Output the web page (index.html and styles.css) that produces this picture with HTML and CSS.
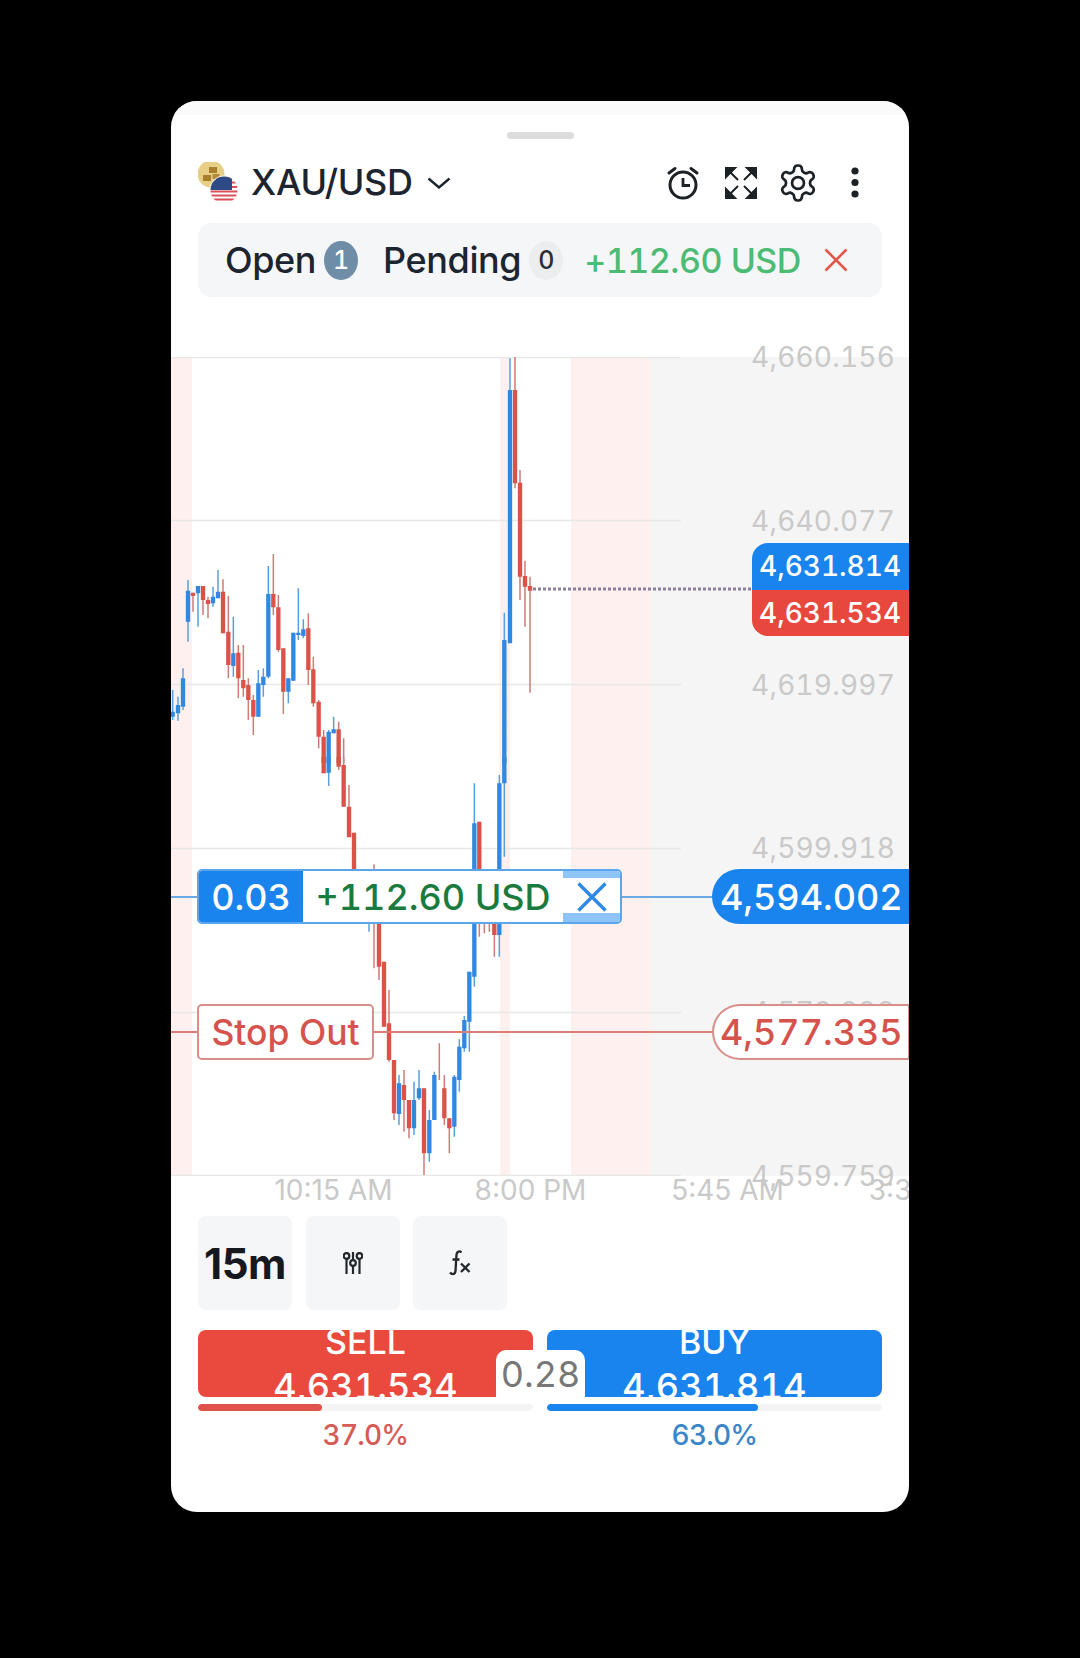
FILE: index.html
```html
<!DOCTYPE html>
<html lang="en">
<head>
<meta charset="utf-8">
<title>XAU/USD</title>
<link rel="stylesheet" href="styles.css">
</head>
<body>
<main class="sheet">
  <div class="sheet-strip"></div>
  <div class="handle"></div>

  <header class="header">
    <svg class="pair-icon" viewBox="0 0 40 41" width="40" height="41">
      <defs><clipPath id="flagClip"><circle cx="26" cy="28" r="13.5"/></clipPath></defs>
      <circle cx="13" cy="12" r="13.5" fill="#e8cf86"/>
      <rect x="11" y="5" width="8" height="6" fill="#a97f2c"/>
      <rect x="5" y="13" width="8" height="6" fill="#a97f2c"/>
      <rect x="14.5" y="12" width="7" height="5" fill="#b38a3a"/>
      <circle cx="26" cy="28" r="14.5" fill="#fbf6e8"/>
      <g clip-path="url(#flagClip)">
        <rect x="12" y="14" width="28" height="28" fill="#fff"/>
        <path d="M12 16h28M12 20.5h28M12 25h28M12 29.5h28M12 33.5h28M12 37.5h28" stroke="#d9505a" stroke-width="2"/>
        <rect x="12" y="14" width="22" height="14" fill="#2f4b86"/>
      </g>
    </svg>
    <h1 class="pair-name">XAU/USD</h1>
    <svg class="chevron" viewBox="0 0 24 12" width="24" height="12"><path d="M1.5 1.5 12 10.5 22.5 1.5" fill="none" stroke="#1c2430" stroke-width="2.4"/></svg>
    <div class="header-actions">
      <svg class="action" viewBox="0 0 34 34" width="34" height="34" fill="none" stroke="#1c2126" stroke-width="3">
        <circle cx="17" cy="19" r="13"/>
        <path d="M17 12V19.5H24" stroke-width="2.8"/>
        <path d="M3 7 9 2.5M31 7 25 2.5" stroke-linecap="round"/>
      </svg>
      <svg class="action" viewBox="0 0 34 34" width="34" height="34" fill="#1c2126" stroke="#1c2126" stroke-width="3">
        <path d="M2 2H11L2 11ZM5 5 14 14" stroke-width="2"/>
        <path d="M32 2H23L32 11ZM29 5 20 14" stroke-width="2"/>
        <path d="M2 32H11L2 23ZM5 29 14 20" stroke-width="2"/>
        <path d="M32 32H23L32 23ZM29 29 20 20" stroke-width="2"/>
      </svg>
      <svg class="action action-gear" viewBox="0 0 24 24" width="42" height="42" fill="none" stroke="#1c2126" stroke-width="1.55">
        <path d="M12.22 2h-.44a2 2 0 0 0-2 2v.18a2 2 0 0 1-1 1.73l-.43.25a2 2 0 0 1-2 0l-.15-.08a2 2 0 0 0-2.73.73l-.22.38a2 2 0 0 0 .73 2.73l.15.1a2 2 0 0 1 1 1.72v.51a2 2 0 0 1-1 1.74l-.15.09a2 2 0 0 0-.73 2.73l.22.38a2 2 0 0 0 2.73.73l.15-.08a2 2 0 0 1 2 0l.43.25a2 2 0 0 1 1 1.73V20a2 2 0 0 0 2 2h.44a2 2 0 0 0 2-2v-.18a2 2 0 0 1 1-1.73l.43-.25a2 2 0 0 1 2 0l.15.08a2 2 0 0 0 2.73-.73l.22-.39a2 2 0 0 0-.73-2.73l-.15-.08a2 2 0 0 1-1-1.74v-.5a2 2 0 0 1 1-1.74l.15-.09a2 2 0 0 0 .73-2.73l-.22-.38a2 2 0 0 0-2.73-.73l-.15.08a2 2 0 0 1-2 0l-.43-.25a2 2 0 0 1-1-1.73V4a2 2 0 0 0-2-2z"/>
        <circle cx="12" cy="12" r="3.4"/>
      </svg>
      <svg class="action" viewBox="0 0 34 34" width="34" height="34" fill="#1c2126">
        <circle cx="17" cy="5" r="3.6"/><circle cx="17" cy="16.5" r="3.6"/><circle cx="17" cy="28" r="3.6"/>
      </svg>
    </div>
  </header>

  <nav class="tabs">
    <span class="tab-label">Open</span>
    <span class="count count-active">1</span>
    <span class="tab-label tab-pending">Pending</span>
    <span class="count">0</span>
    <span class="tabs-pnl">+112.60 USD</span>
    <svg class="tabs-close" viewBox="0 0 24 24" width="24" height="24"><path d="M1.5 1.5 22.5 22.5M22.5 1.5 1.5 22.5" stroke="#e2584d" stroke-width="2.6"/></svg>
  </nav>

  <section class="chart">
    <svg class="plot" viewBox="0 0 738 819" width="738" height="819">
      <rect x="479" y="0" width="259" height="819" fill="#f5f5f5"/>
      <g fill="#fdf0ee">
        <rect x="0" y="0" width="21" height="819"/>
        <rect x="329" y="0" width="10" height="819"/>
        <rect x="400" y="0" width="79" height="819"/>
      </g>
      <path d="M0 .5H510M0 163.5H510M0 327.5H510M0 491.5H510M0 655.5H510M0 818.5H510" stroke="#e8e8e8" stroke-width="1.5" fill="none"/>
      <path d="M362 232H581" stroke="#8d7f9a" stroke-width="3" stroke-dasharray="3 2" fill="none"/>
      <g transform="translate(-1 -7) scale(.33333)" fill="none">
        <path stroke="#5a9fdc" stroke-width="4.5" d="M8 1020V1110M24 1040V1112M39 955V1080M54 690V875M84 708V830M129 710V770M144 660V745M190 800V980M265 960V1100M280 955V1040M295 648V985M355 985V1060M370 848V992M385 715V870M400 808V865M476 1140V1240M491 1100V1150M1003 788V1240M1020 25V880"/>
        <path stroke="#3288e0" stroke-width="13" d="M8 1085V1100M24 1065V1090M39 985V1070M54 722V815M84 708V730M129 740V760M144 725V745M190 910V948M265 1000V1100M280 980V1005M295 732V980M355 985V1025M370 848V992M385 848V855M400 838V858M476 1145V1240M491 1138V1150M1003 870V1240M1020 120V880"/>
        <path stroke="#cf7c76" stroke-width="4.5" d="M69 728V785M99 708V795M114 740V805M159 688V850M175 738V985M205 885V1045M220 885V1040M235 985V1110M250 1035V1155M310 612V795M325 735V905M340 895V1092M415 790V1005M430 920V1070M446 1050V1195M461 1140V1240M506 1115V1240M521 1165V1240M1035 20V415M1050 360V750M1065 632V830M1080 680V1028"/>
        <path stroke="#db5249" stroke-width="13" d="M69 728V738M99 708V750M114 750V762M159 725V850M175 845V945M205 908V985M220 990V1015M235 1005V1050M250 1050V1100M310 732V772M325 772V900M340 895V1025M415 835V960M430 958V1060M446 1055V1160M461 1160V1240M506 1138V1240M1035 120V400M1050 398V680M1065 678V710M1080 708V722"/>
      </g>
      <g transform="translate(-1 403) scale(.33333)" fill="none">
        <path stroke="#5a9fdc" stroke-width="4.5" d="M476 -10V78M913 70V680M988 45V590M1003 -10V290M597 480V515M687 945V1095M732 965V1125M747 930V1020M778 1050V1205M793 935V1080M853 945V1130M868 838V995M883 768V875M898 635V875"/>
        <path stroke="#3288e0" stroke-width="13" d="M476 -10V38M913 190V650M988 70V525M1003 -10V70M687 970V1062M732 1020V1105M747 985V1015M778 1080V1180M793 945V1080M853 950V1100M868 860V960M883 780V865M898 635V785"/>
        <path stroke="#cf7c76" stroke-width="4.5" d="M461 -10V40M506 -10V30M521 -10V140M537 75V195M552 218V330M612 313V625M627 480V660M642 605V800M657 690V905M672 900V1080M702 930V1115M717 1020V1135M762 985V1245M808 850V960M823 945V1095M838 1075V1180M928 185V530M943 480V520M958 480V515M973 480V590"/>
        <path stroke="#db5249" stroke-width="13" d="M461 -10V40M506 -10V20M521 15V140M537 140V232M552 218V330M627 480V620M642 605V800M657 790V900M672 900V1060M702 975V1020M717 1020V1105M762 985V1180M823 985V1075M838 1075V1105M928 185V340M973 480V525"/>
      </g>
    </svg>

    <div class="time-axis">
      <span class="tick">10:15 AM</span>
      <span class="tick">8:00 PM</span>
      <span class="tick">5:45 AM</span>
      <span class="tick">3:30 PM</span>
    </div>

    <div class="price-axis">
      <span>4,660.156</span>
      <span>4,640.077</span>
      <span>4,619.997</span>
      <span>4,599.918</span>
      <span>4,579.838</span>
      <span>4,559.759</span>
    </div>

    <div class="quote">
      <div class="quote-ask">4,631.814</div>
      <div class="quote-bid">4,631.534</div>
    </div>

    <div class="level level-position">
      <div class="position-label">
        <span class="position-qty">0.03</span>
        <span class="position-pnl">+112.60 USD</span>
        <span class="position-close">
          <svg viewBox="0 0 30 30" width="30" height="30"><path d="M1.5 1.5 28.5 28.5M28.5 1.5 1.5 28.5" stroke="#2e8ae6" stroke-width="3.4"/></svg>
        </span>
      </div>
      <span class="level-tag position-tag">4,594.002</span>
    </div>

    <div class="level level-stop">
      <span class="stop-label">Stop Out</span>
      <span class="level-tag stop-tag">4,577.335</span>
    </div>
  </section>

  <div class="toolbar">
    <button class="tool tool-interval">15m</button>
    <button class="tool">
      <svg viewBox="0 0 20 24" width="20" height="24" fill="none" stroke="#23282d" stroke-width="2.2">
        <path d="M3.5 8V23M10 1V9M10 15V23M16.5 8V23M3.5 1V2M16.5 1V2"/>
        <circle cx="3.5" cy="5" r="2.8"/><circle cx="10" cy="12" r="2.8"/><circle cx="16.5" cy="5" r="2.8"/>
      </svg>
    </button>
    <button class="tool">
      <svg viewBox="0 0 22 26" width="22" height="26" fill="none" stroke="#23282d" stroke-width="2.3">
        <path d="M12.5 2.5C10.5 .5 8 1.5 7.5 4.5L6.5 21C6 24.5 3 25 1 22.5M3.5 9.5H10.5"/>
        <path d="M12 13.5 20.5 22M20.5 13.5 12 22"/>
      </svg>
    </button>
  </div>

  <section class="trade">
    <div class="side">
      <div class="trade-btn trade-sell">
        <span class="trade-name">SELL</span>
        <span class="trade-price">4,631.534</span>
      </div>
      <div class="ratio"><div class="ratio-fill ratio-sell" style="width:37%"></div></div>
      <div class="pct pct-sell">37.0%</div>
    </div>
    <div class="side">
      <div class="trade-btn trade-buy">
        <span class="trade-name">BUY</span>
        <span class="trade-price">4,631.814</span>
      </div>
      <div class="ratio"><div class="ratio-fill ratio-buy" style="width:63%"></div></div>
      <div class="pct pct-buy">63.0%</div>
    </div>
    <div class="spread">0.28</div>
  </section>
</main>
</body>
</html>
```
FILE: styles.css
```css
* { box-sizing: border-box; }
html, body { margin: 0; background: #000; }
body {
  width: 1080px;
  height: 1658px;
  padding: 101px 0 0 171px;
  font-family: Inter, "Liberation Sans", sans-serif;
  font-variant-numeric: tabular-nums;
  overflow: hidden;
}
.sheet {
  width: 738px;
  height: 1411px;
  background: #fff;
  border-radius: 26px;
  overflow: hidden;
  display: flex;
  flex-direction: column;
}
.sheet-strip { height: 14px; background: #fafafa; flex: none; }
.handle {
  width: 67px; height: 7px; margin: 17px auto 0;
  background: #dcdcdc; border-radius: 4px; flex: none;
}
.header {
  display: flex; align-items: center; height: 41px; margin-top: 23px;
  padding: 0 37px 0 27px; flex: none;
}
.pair-icon { flex: none; }
.pair-name {
  margin: 0 0 0 13px; font-size: 36px; line-height: 41px; font-weight: 500;
  color: #1c2430; letter-spacing: -.3px;
}
.chevron { margin-left: 14px; flex: none; }
.header-actions { display: flex; align-items: center; gap: 23.2px; margin-left: auto; }
.action { display: block; flex: none; }
.action-gear { margin: 0 -4px; }

.tabs {
  display: flex; align-items: center; height: 74px; margin: 20px 27px 0 27px;
  padding-left: 27px; background: #f5f6f7; border-radius: 14px; flex: none;
}
.tab-label { font-size: 36px; font-weight: 500; color: #1c2430; letter-spacing: -.4px; }
.tab-pending { margin-left: 25px; }
.count {
  display: flex; align-items: center; justify-content: center;
  width: 34px; height: 39px; margin-left: 8px; border-radius: 50%;
  background: #ecedee; font-size: 25px; font-weight: 500; color: #2a2f35;
}
.count-active { background: #6f8da6; color: #fff; }
.tabs-pnl { margin-left: 21px; font-size: 34px; font-weight: 500; color: #4cbb74; letter-spacing: -.5px; }
.tabs-close { margin-left: 23px; flex: none; }

.chart { position: relative; height: 848px; margin-top: 60px; flex: none; }
.plot { display: block; }
.time-axis { display: flex; position: absolute; top: 818px; left: 64px; }
.tick {
  width: 197px; flex: none; text-align: center; font-size: 28px; line-height: 30px;
  color: #c9c9c9; white-space: nowrap; font-variant-numeric: normal;
}
.price-axis {
  position: absolute; top: -18px; right: 14px; height: 855px;
  display: flex; flex-direction: column; justify-content: space-between;
  font-size: 28px; line-height: 36px; color: #c9c9c9; letter-spacing: .2px;
}
.quote { position: absolute; top: 186px; right: 0; width: 157px; font-size: 28px; font-weight: 500; color: #fff; }
.quote-ask, .quote-bid { display: flex; align-items: center; padding-left: 7px; height: 46.5px; }
.quote-ask { background: #1a84ee; border-radius: 16px 0 0 0; }
.quote-bid { background: #e8473d; border-radius: 0 0 0 16px; }

.level { position: absolute; left: 0; right: 0; display: flex; align-items: center; }
.level::before { content: ""; position: absolute; left: 0; right: 100px; top: 50%; height: 2px; margin-top: -1px; }
.level-position { top: 512px; height: 55px; }
.level-position::before { background: #6aa9e4; }
.level-stop { top: 647px; height: 56px; }
.level-stop::before { background: #dc7d77; }
.level-tag {
  position: relative; margin-left: auto; width: 197px; height: 100%;
  display: flex; align-items: center; padding-left: 8px;
  font-size: 36px; font-weight: 500; border-radius: 28px 0 0 28px; white-space: nowrap;
}
.position-tag { background: #1a84ee; color: #fff; }
.stop-tag { background: #fff; color: #d5534c; border: 2px solid #d98e88; border-right-width: 1px; padding-left: 6px; }

.position-label {
  position: relative; display: flex; width: 425px; height: 55px; margin-left: 26px;
  border: 2px solid #5ba6ea; border-radius: 5px; background: #fff; overflow: hidden;
}
.position-qty {
  display: flex; align-items: center; justify-content: center; width: 104px;
  background: #1a84ee; color: #fff; font-size: 36px; font-weight: 500;
}
.position-pnl {
  flex: 1; display: flex; align-items: center; justify-content: center;
  font-size: 36px; font-weight: 500; color: #1b7a3e; white-space: nowrap;
}
.position-close {
  display: flex; align-items: center; justify-content: center; width: 57px;
  background: linear-gradient(#8fc4f8 0 7px, #fff 7px 42px, #8fc4f8 42px);
}
.position-close svg { display: block; }
.stop-label {
  position: relative; display: flex; align-items: center; justify-content: center;
  width: 177px; height: 56px; margin-left: 26px;
  background: #fff; border: 2px solid #d98e88; border-radius: 5px;
  font-size: 35.5px; font-weight: 500; color: #d5534c; white-space: nowrap;
}

.toolbar { display: flex; gap: 13.5px; margin: 11px 0 0 27px; flex: none; }
.tool {
  display: flex; align-items: center; justify-content: center;
  width: 94px; height: 94px; padding: 0; border: 0; border-radius: 8px;
  background: #f5f6f7; font-family: inherit; color: #15191e;
}
.tool-interval { font-size: 42px; font-weight: 700; letter-spacing: -.4px; }

.trade {
  position: relative; display: grid; grid-template-columns: 335px 335px; column-gap: 14px;
  margin: 20px 0 0 27px; flex: none; width: 684px;
}
.side { display: flex; flex-direction: column; }
.trade-btn {
  height: 67px; border-radius: 8px; overflow: hidden; color: #fff;
  display: flex; flex-direction: column; align-items: center;
}
.trade-sell { background: #ea4a3d; border-radius: 8px 8px 0 8px; }
.trade-buy { background: #1a84ee; border-radius: 8px 8px 8px 0; }
.trade-name { font-size: 34px; line-height: 32px; margin-top: -4px; font-weight: 500; flex: none; }
.trade-price { font-size: 36px; line-height: 36px; margin-top: 10px; font-weight: 500; flex: none; letter-spacing: .2px; }
.ratio { height: 7px; margin-top: 7px; background: #f4f4f4; border-radius: 4px; overflow: hidden; }
.ratio-fill { height: 100%; border-radius: 4px; }
.ratio-sell { background: #e0534a; }
.ratio-buy { background: #1a84ee; }
.pct { margin-top: 7px; font-size: 28px; line-height: 34px; text-align: center; letter-spacing: -.8px; font-weight: 500; }
.pct-sell { color: #d65a55; }
.pct-buy { color: #3a86c8; }
.spread {
  position: absolute; left: 298px; top: 20px; width: 89px; height: 47px;
  display: flex; align-items: center; justify-content: center;
  background: #fff; border-radius: 10px 10px 0 0;
  font-size: 36px; color: #777;
}
```
